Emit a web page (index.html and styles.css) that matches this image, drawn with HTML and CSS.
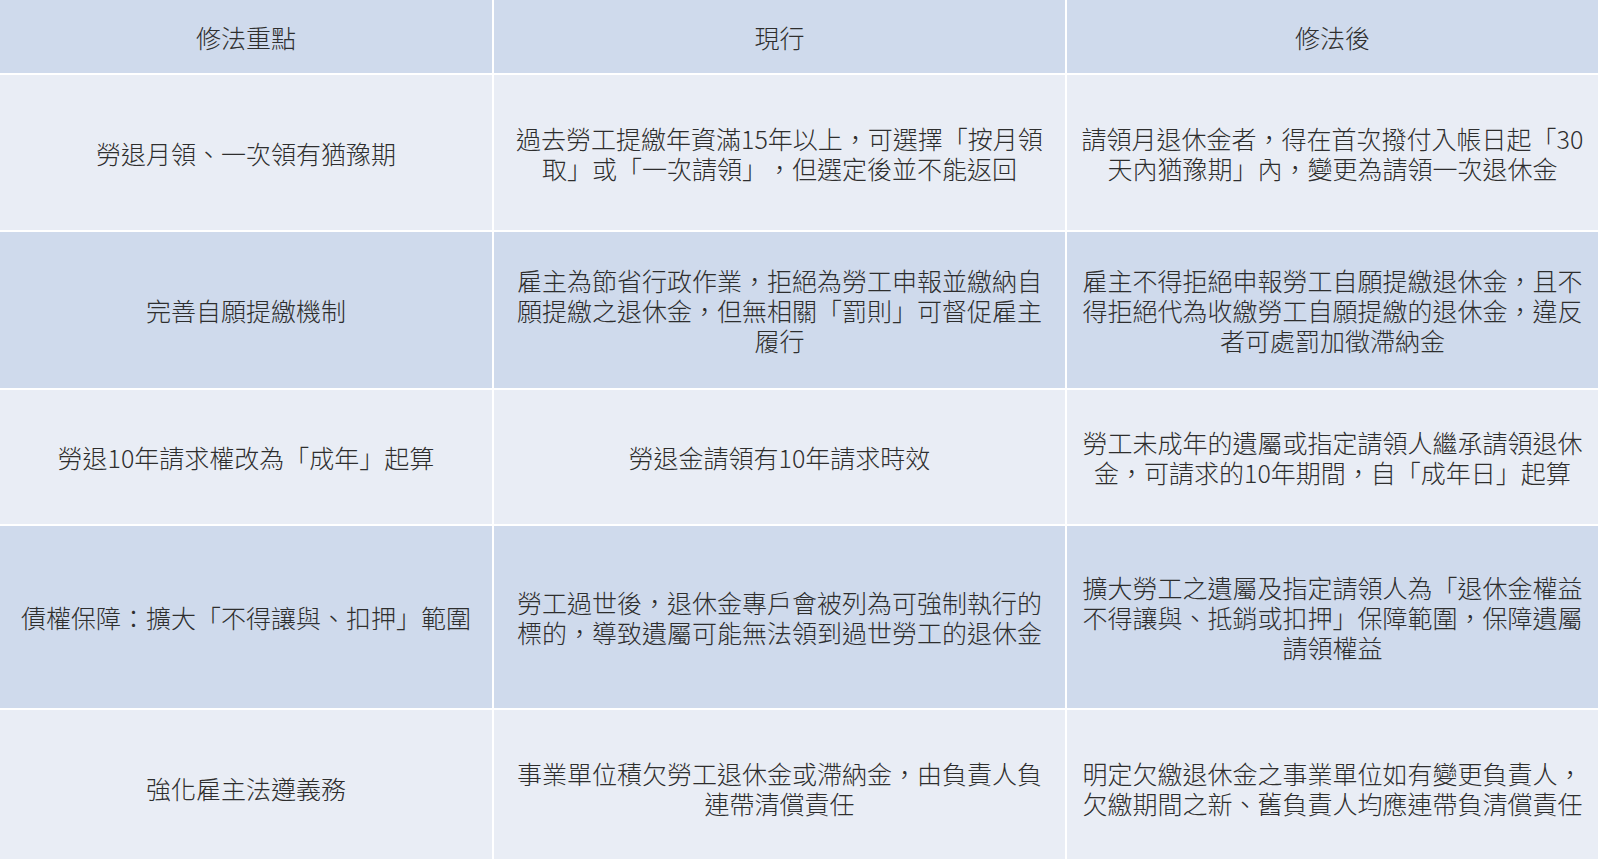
FILE: index.html
```html
<!DOCTYPE html>
<html lang="zh-Hant">
<head>
<meta charset="utf-8">
<title>勞退修法重點</title>
<link rel="stylesheet" href="styles.css">
</head>
<body>
<div class="table">
  <div class="cell head">修法重點</div>
  <div class="cell head">現行</div>
  <div class="cell head">修法後</div>

  <div class="cell light">勞退月領、一次領有猶豫期</div>
  <div class="cell light">過去勞工提繳年資滿15年以上，可選擇「按月領取」或「一次請領」，但選定後並不能返回</div>
  <div class="cell light">請領月退休金者，得在首次撥付入帳日起「30天內猶豫期」內，變更為請領一次退休金</div>

  <div class="cell dark">完善自願提繳機制</div>
  <div class="cell dark">雇主為節省行政作業，拒絕為勞工申報並繳納自願提繳之退休金，但無相關「罰則」可督促雇主履行</div>
  <div class="cell dark">雇主不得拒絕申報勞工自願提繳退休金，且不得拒絕代為收繳勞工自願提繳的退休金，違反者可處罰加徵滯納金</div>

  <div class="cell light">勞退10年請求權改為「成年」起算</div>
  <div class="cell light">勞退金請領有10年請求時效</div>
  <div class="cell light">勞工未成年的遺屬或指定請領人繼承請領退休金，可請求的10年期間，自「成年日」起算</div>

  <div class="cell dark">債權保障：擴大「不得讓與、扣押」範圍</div>
  <div class="cell dark">勞工過世後，退休金專戶會被列為可強制執行的標的，導致遺屬可能無法領到過世勞工的退休金</div>
  <div class="cell dark">擴大勞工之遺屬及指定請領人為「退休金權益不得讓與、抵銷或扣押」保障範圍，保障遺屬請領權益</div>

  <div class="cell light">強化雇主法遵義務</div>
  <div class="cell light">事業單位積欠勞工退休金或滯納金，由負責人負連帶清償責任</div>
  <div class="cell light">明定欠繳退休金之事業單位如有變更負責人，欠繳期間之新、舊負責人均應連帶負清償責任</div>
</div>
</body>
</html>
```

FILE: styles.css
```css
html, body {
  margin: 0;
  padding: 0;
  background: #ffffff;
  overflow: hidden;
  height: 859px;
}

.table {
  display: grid;
  width: 1598px;
  grid-template-columns: 492px 571px 531px;
  grid-template-rows: 73px 155px 156px 134px 182px 155px;
  gap: 2px;
  background: #ffffff;
  font-family: "Noto Sans CJK TC", "Noto Sans", sans-serif;
  font-size: 25px;
  font-weight: 300;
  line-height: 30px;
  color: #2e2e2e;
  text-autospace: no-autospace;
  text-spacing-trim: space-all;
}

.cell {
  display: flex;
  align-items: center;
  justify-content: center;
  text-align: center;
  padding: 0 12px;
}

.head,
.dark {
  background: #cfdaec;
}

.light {
  background: #e9edf5;
}
```
